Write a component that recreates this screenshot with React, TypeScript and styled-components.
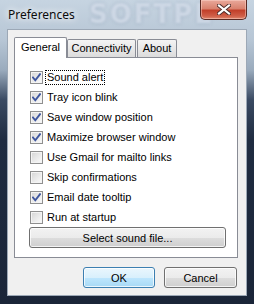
import React from 'react';
import styled, { createGlobalStyle } from 'styled-components';

const GlobalStyle = createGlobalStyle`
  html, body {
    margin: 0;
    padding: 0;
    background: #1b273a;
  }
  * {
    box-sizing: border-box;
  }
`;

const Window = styled.div`
  position: relative;
  width: 254px;
  height: 304px;
  display: flex;
  flex-direction: column;
  padding: 0 7px 8px 7px;
  overflow: hidden;
  background: linear-gradient(180deg, #c6d4e1 0px, #b7c6d5 40px, #9aabbd 70px, #3a4a62 100px, #1f2c41 140px, #1a2538 100%);
`;

const TitleBar = styled.div`
  position: relative;
  height: 29px;
  display: flex;
  justify-content: space-between;
  align-items: flex-start;
`;

const Watermark = styled.div`
  position: absolute;
  left: 82px;
  top: 0;
  font-family: "DejaVu Sans", sans-serif;
  font-weight: bold;
  font-size: 26px;
  line-height: 28px;
  letter-spacing: 2px;
  color: rgba(222, 230, 240, 0.75);
  text-shadow: 0 0 3px rgba(110, 130, 160, 0.5);
  filter: blur(1.2px);
  pointer-events: none;
`;

const Title = styled.span`
  position: relative;
  margin: 8px 0 0 1px;
  font-family: "Noto Sans", "Open Sans", sans-serif;
  font-size: 12px;
  line-height: 14px;
  color: #0c0c0c;
  text-shadow: 0 0 6px #fff, 0 0 10px rgba(255, 255, 255, 0.9);
`;

const CloseButton = styled.div`
  position: relative;
  width: 47px;
  height: 20px;
  border: 1px solid #5a2a24;
  border-top: none;
  border-radius: 0 0 5px 5px;
  background: linear-gradient(180deg, #e9a99b 0%, #d9826f 45%, #c2402a 55%, #d06049 85%, #e0896f 100%);
  box-shadow: inset 0 0 0 1px rgba(255, 220, 210, 0.45);
  display: flex;
  align-items: center;
  justify-content: center;
`;

const Client = styled.div`
  flex: 1;
  display: flex;
  flex-direction: column;
  padding: 7px 8px 0 6px;
  background: #f0f0f0;
  border: 1px solid #9ca8b6;
`;

const TabRow = styled.div`
  position: relative;
  z-index: 1;
  height: 21px;
  margin-bottom: -1px;
  display: flex;
  align-items: flex-end;
`;

const Tab = styled.div<{ $active?: boolean; $width: number; $gap?: number }>`
  width: ${p => p.$width}px;
  height: ${p => (p.$active ? 21 : 18)}px;
  margin-bottom: ${p => (p.$active ? 0 : 1)}px;
  margin-right: ${p => p.$gap ?? 0}px;
  border: 1px solid #898c95;
  border-bottom: none;
  border-radius: 2px 2px 0 0;
  background: ${p => (p.$active ? '#ffffff' : 'linear-gradient(180deg, #f4f4f4 0%, #e8e8e8 50%, #dcdcdc 100%)')};
  display: flex;
  justify-content: center;
  padding-top: ${p => (p.$active ? 3 : 2)}px;
  font-family: "Liberation Sans", Arial, sans-serif;
  font-size: 11px;
  line-height: 13px;
  color: #000;
`;

const Panel = styled.div`
  height: 201px;
  background: #fff;
  border: 1px solid #898c95;
  padding: 9px 0 0 15px;
  display: flex;
  flex-direction: column;
`;

const CheckRow = styled.div`
  height: 20px;
  display: flex;
  align-items: center;
  gap: 3px;
  font-family: "Liberation Sans", Arial, sans-serif;
  font-size: 11px;
  color: #000;
`;

const Box = styled.div`
  width: 13px;
  height: 13px;
  border: 1px solid #8f8f8f;
  background: linear-gradient(135deg, #d4d4d4 0%, #e9e9e9 50%, #fbfbfb 100%);
  box-shadow: inset 0 0 0 1px #f4f4f4;
  display: flex;
  align-items: center;
  justify-content: center;
`;

const Label = styled.span<{ $focused?: boolean }>`
  padding: 0 1px;
  line-height: 13px;
  outline: ${p => (p.$focused ? '1px dotted #000' : 'none')};
`;

const PushButton = styled.div<{ $default?: boolean; $width: number }>`
  width: ${p => p.$width}px;
  height: 21px;
  border: 1px solid ${p => (p.$default ? '#3c7fb1' : '#707070')};
  border-radius: 3px;
  background: ${p =>
    p.$default
      ? 'linear-gradient(180deg, #eaf6fd 0%, #d9f0fc 50%, #bee6fd 51%, #a7d9f5 100%)'
      : 'linear-gradient(180deg, #f2f2f2 0%, #ebebeb 50%, #dddddd 51%, #cfcfcf 100%)'};
  box-shadow: inset 0 0 0 1px rgba(255, 255, 255, 0.75);
  display: flex;
  align-items: center;
  justify-content: center;
  font-family: "Liberation Sans", Arial, sans-serif;
  font-size: 11px;
  color: #000;
`;

const SoundButton = styled(PushButton)`
  margin-left: -1px;
`;

const Footer = styled.div`
  display: flex;
  justify-content: flex-end;
  gap: 9px;
  margin-top: 9px;
  padding-right: 1px;
`;

const Check = () => (
  <svg width="9" height="9" viewBox="0 0 9 9">
    <path d="M1 4.5 L3.3 7.3 L8 1.2" fill="none" stroke="#3e569e" strokeWidth="1.9" strokeLinecap="square" />
  </svg>
);

const CloseX = () => (
  <svg width="14" height="11" viewBox="0 0 14 11">
    <path d="M2 1.5 L12 9.5 M12 1.5 L2 9.5" stroke="#4a2a28" strokeWidth="4" strokeLinecap="square" />
    <path d="M2 1.5 L12 9.5 M12 1.5 L2 9.5" stroke="#ffffff" strokeWidth="2.2" strokeLinecap="square" />
  </svg>
);

const options = [
  { label: 'Sound alert', checked: true, focused: true },
  { label: 'Tray icon blink', checked: true },
  { label: 'Save window position', checked: true },
  { label: 'Maximize browser window', checked: true },
  { label: 'Use Gmail for mailto links', checked: false },
  { label: 'Skip confirmations', checked: false },
  { label: 'Email date tooltip', checked: true },
  { label: 'Run at startup', checked: false },
];

export default function App() {
  return (
    <>
      <GlobalStyle />
      <Window>
        <TitleBar>
          <Watermark>SOFTPE</Watermark>
          <Title>Preferences</Title>
          <CloseButton>
            <CloseX />
          </CloseButton>
        </TitleBar>
        <Client>
          <TabRow>
            <Tab $active $width={53}>General</Tab>
            <Tab $width={69} $gap={1}>Connectivity</Tab>
            <Tab $width={40}>About</Tab>
          </TabRow>
          <Panel>
            {options.map(o => (
              <CheckRow key={o.label}>
                <Box>{o.checked && <Check />}</Box>
                <Label $focused={o.focused}>{o.label}</Label>
              </CheckRow>
            ))}
            <SoundButton $width={197}>Select sound file...</SoundButton>
          </Panel>
          <Footer>
            <PushButton $default $width={72}>OK</PushButton>
            <PushButton $width={73}>Cancel</PushButton>
          </Footer>
        </Client>
      </Window>
    </>
  );
}
